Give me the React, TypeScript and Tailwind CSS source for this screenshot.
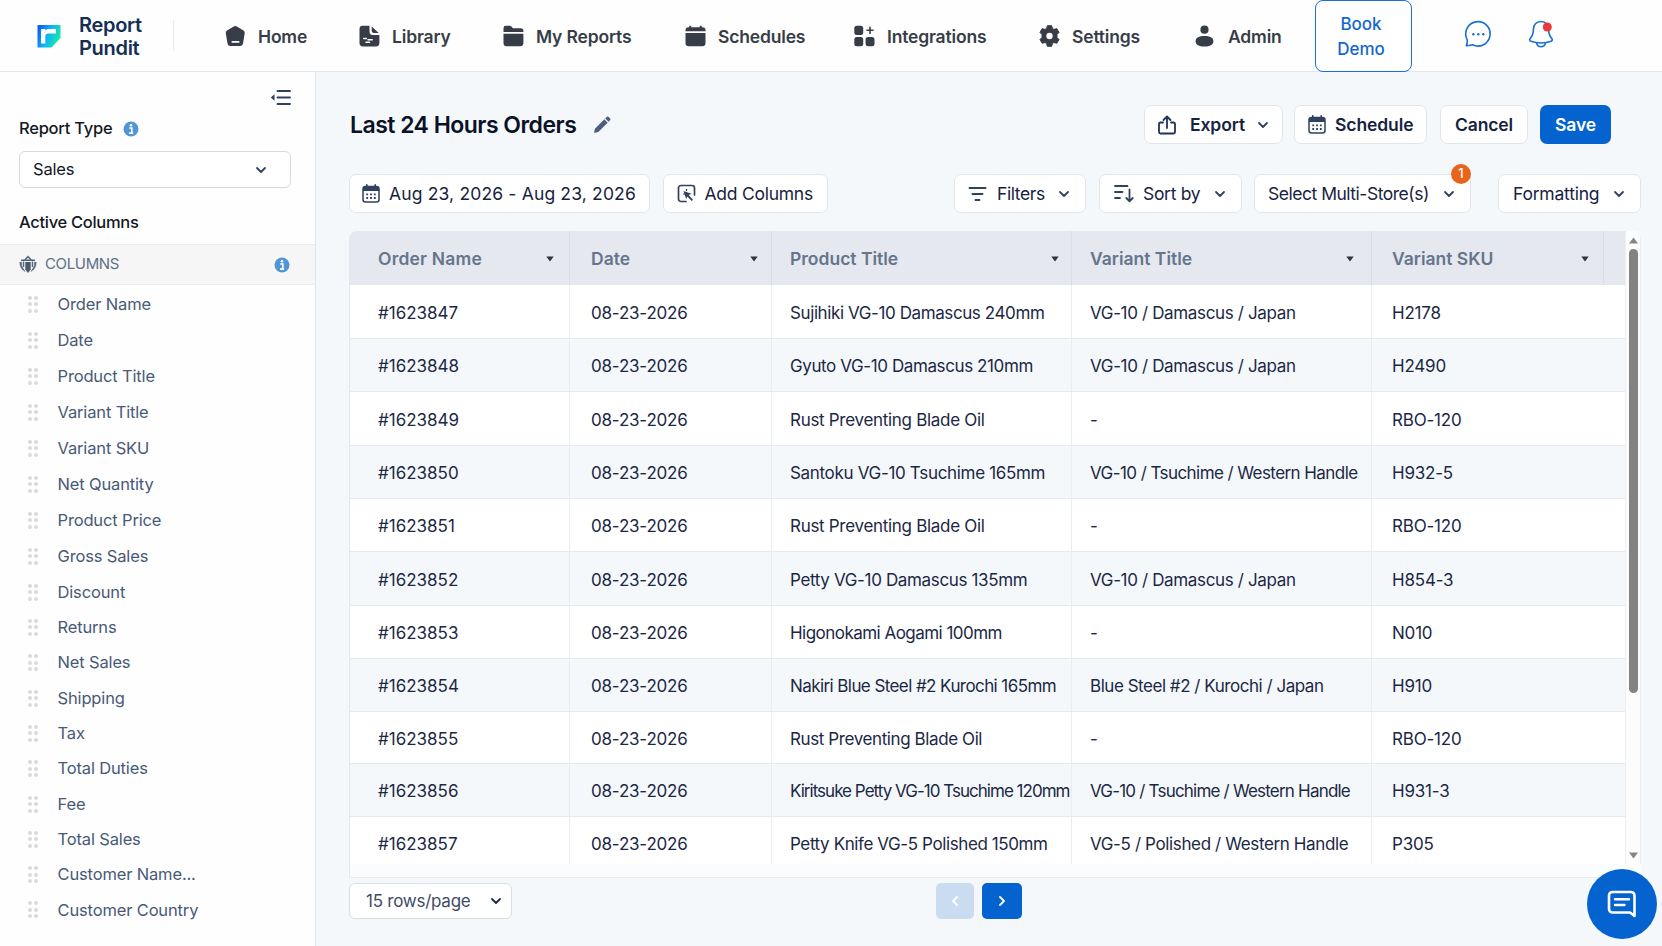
import type { ReactNode } from 'react'

interface NavItem {
  label: string
  width: string
  icon: ReactNode
}

interface OrderRow {
  id: string
  product: string
  variant: string
  sku: string
  height: string
  productTracking: string
  variantTracking: string
}

const ICON = '#373d47'
const NAVY = '#2f4260'

const navItems: NavItem[] = [
  {
    label: 'Home',
    width: 'w-[134px]',
    icon: (
      <svg width="21" height="22" viewBox="0 0 21 22">
        <path d="M8.7 1.4a3 3 0 0 1 3.2 0l6.6 4.2a2.6 2.6 0 0 1 1.2 2.7l-1.6 10A3 3 0 0 1 15.2 21H5.5a3 3 0 0 1-3-2.6L.8 8.3A2.6 2.6 0 0 1 2 5.6z" fill={ICON} />
        <rect x="6.5" y="16" width="8" height="1.8" rx=".9" fill="#fff" />
      </svg>
    ),
  },
  {
    label: 'Library',
    width: 'w-[144px]',
    icon: (
      <svg width="21" height="22" viewBox="0 0 21 22">
        <path d="M3.8.7h6.7v5.8a3.5 3.5 0 0 0 3.5 3.5h6.4v8a3.4 3.4 0 0 1-3.4 3.4H3.900A3.4 3.4 0 0 1 .5 18V4A3.3 3.3 0 0 1 3.8.7z" fill={ICON} />
        <path d="M12.7 1.4l7 6.7h-4.5a2.5 2.5 0 0 1-2.5-2.5z" fill={ICON} />
        <path d="M4.6 13.4h2.800M9 14.7h4.2M7 17.3h3.5" stroke="#fff" strokeWidth="1.5" strokeLinecap="round" />
      </svg>
    ),
  },
  {
    label: 'My Reports',
    width: 'w-[182px]',
    icon: (
      <svg width="21" height="22" viewBox="0 0 21 22">
        <path d="M.5 7V3.200A2.4 2.4 0 0 1 2.9.8h3.8c.8 0 1.4.3 1.9.9L10 3.2h7.6a2.8 2.8 0 0 1 2.8 2.8v1z" fill={ICON} />
        <path d="M.5 8.7h19.900V18a3.3 3.3 0 0 1-3.3 3.3H3.800A3.3 3.3 0 0 1 .5 18z" fill={ICON} />
      </svg>
    ),
  },
  {
    label: 'Schedules',
    width: 'w-[169px]',
    icon: (
      <svg width="21" height="22" viewBox="0 0 21 22">
        <path d="M4.3.8h1.900v1.5h8.600V.8h1.900v1.5h.8a3 3 0 0 1 3 3v.9H.5v-.9a3 3 0 0 1 3-3h.8z" fill={ICON} />
        <path d="M.5 7.9h20V18a3.3 3.3 0 0 1-3.3 3.3H3.800A3.3 3.3 0 0 1 .5 18z" fill={ICON} />
      </svg>
    ),
  },
  {
    label: 'Integrations',
    width: 'w-[185px]',
    icon: (
      <svg width="21" height="22" viewBox="0 0 21 22">
        <rect x=".3" y=".7" width="8.9" height="9.3" rx="2.5" fill={ICON} />
        <rect x=".3" y="12" width="8.9" height="9.3" rx="2.5" fill={ICON} />
        <rect x="11.6" y="12" width="8.9" height="9.3" rx="2.5" fill={ICON} />
        <path d="M16 1.7v7.200M12.4 5.3h7.2" stroke={ICON} strokeWidth="1.6" />
      </svg>
    ),
  },
  {
    label: 'Settings',
    width: 'w-[156px]',
    icon: (
      <svg width="21" height="22" viewBox="0 0 21 22">
        <path
          d="M8.3.7h4.4l.7 2.8 1.6.9 2.8-.8 2.2 3.8-2 2.100v2.900l2 2.100-2.2 3.8-2.8-.8-1.6.9-.7 2.900H8.300l-.7-2.900-1.6-.9-2.8.8L1 14.5l2-2.100V9.500L1 7.4l2.2-3.800 2.8.8 1.6-.9z"
          fill={ICON}
          stroke={ICON}
          strokeLinejoin="round"
        />
        <circle cx="10.5" cy="11" r="3.2" fill="#fff" />
      </svg>
    ),
  },
  {
    label: 'Admin',
    width: 'w-[120px]',
    icon: (
      <svg width="21" height="22" viewBox="0 0 21 22">
        <circle cx="9.5" cy="4.700" r="4.1" fill={ICON} />
        <path d="M.6 16.200c0-3.400 3.600-5.100 8.900-5.100s8.900 1.700 8.900 5.100-3.400 5.300-8.900 5.300-8.900-1.900-8.900-5.300z" fill={ICON} />
      </svg>
    ),
  },
]

const columns = [
  'Order Name', 'Date', 'Product Title', 'Variant Title', 'Variant SKU', 'Net Quantity',
  'Product Price', 'Gross Sales', 'Discount', 'Returns', 'Net Sales', 'Shipping', 'Tax',
  'Total Duties', 'Fee', 'Total Sales', 'Customer Name...', 'Customer Country',
]

const headers = [
  { label: 'Order Name', cell: 'w-[220px] pl-7 pr-[15px] tracking-[0.2px]' },
  { label: 'Date', cell: 'w-[202px] pl-[21px] pr-[13px]' },
  { label: 'Product Title', cell: 'w-[300px] pl-[18px] pr-[12px]' },
  { label: 'Variant Title', cell: 'w-[300px] pl-[18px] pr-[17px]' },
  { label: 'Variant SKU', cell: 'w-[232px] pl-[20px] pr-[14px]' },
]

const rows: OrderRow[] = [
  { id: '#1623847', product: 'Sujihiki VG-10 Damascus 240mm', variant: 'VG-10 / Damascus / Japan', sku: 'H2178', height: 'h-[54px]', productTracking: 'tracking-[-0.4px]', variantTracking: 'tracking-[-0.35px]' },
  { id: '#1623848', product: 'Gyuto VG-10 Damascus 210mm', variant: 'VG-10 / Damascus / Japan', sku: 'H2490', height: 'h-[53px]', productTracking: 'tracking-[-0.4px]', variantTracking: 'tracking-[-0.35px]' },
  { id: '#1623849', product: 'Rust Preventing Blade Oil', variant: '-', sku: 'RBO-120', height: 'h-[54px]', productTracking: 'tracking-[-0.3px]', variantTracking: '' },
  { id: '#1623850', product: 'Santoku VG-10 Tsuchime 165mm', variant: 'VG-10 / Tsuchime / Western Handle', sku: 'H932-5', height: 'h-[53px]', productTracking: 'tracking-[-0.32px]', variantTracking: 'tracking-[-0.57px]' },
  { id: '#1623851', product: 'Rust Preventing Blade Oil', variant: '-', sku: 'RBO-120', height: 'h-[53px]', productTracking: 'tracking-[-0.3px]', variantTracking: '' },
  { id: '#1623852', product: 'Petty VG-10 Damascus 135mm', variant: 'VG-10 / Damascus / Japan', sku: 'H854-3', height: 'h-[54px]', productTracking: 'tracking-[-0.35px]', variantTracking: 'tracking-[-0.35px]' },
  { id: '#1623853', product: 'Higonokami Aogami 100mm', variant: '-', sku: 'N010', height: 'h-[53px]', productTracking: 'tracking-[-0.53px]', variantTracking: '' },
  { id: '#1623854', product: 'Nakiri Blue Steel #2 Kurochi 165mm', variant: 'Blue Steel #2 / Kurochi / Japan', sku: 'H910', height: 'h-[53px]', productTracking: 'tracking-[-0.58px]', variantTracking: 'tracking-[-0.47px]' },
  { id: '#1623855', product: 'Rust Preventing Blade Oil', variant: '-', sku: 'RBO-120', height: 'h-[52px]', productTracking: 'tracking-[-0.4px]', variantTracking: '' },
  { id: '#1623856', product: 'Kiritsuke Petty VG-10 Tsuchime 120mm', variant: 'VG-10 / Tsuchime / Western Handle', sku: 'H931-3', height: 'h-[53px]', productTracking: 'tracking-[-0.98px]', variantTracking: 'tracking-[-0.8px]' },
  { id: '#1623857', product: 'Petty Knife VG-5 Polished 150mm', variant: 'VG-5 / Polished / Western Handle', sku: 'P305', height: 'h-[53px]', productTracking: 'tracking-[-0.4px]', variantTracking: 'tracking-[-0.37px]' },
]

const Chevron = ({ color = NAVY, className = '' }: { color?: string; className?: string }) => (
  <svg width="12" height="12" viewBox="0 0 12 12" className={`shrink-0 ${className}`}>
    <path d="M2 4l4 4 4-4" fill="none" stroke={color} strokeWidth="1.8" strokeLinecap="round" strokeLinejoin="round" />
  </svg>
)

const InfoIcon = () => (
  <svg width="16" height="16" viewBox="0 0 16 16" className="shrink-0">
    <circle cx="8" cy="8" r="7.5" fill="#5096d6" />
    <circle cx="8" cy="4.2" r="1.3" fill="#fff" />
    <path d="M6.200 7h2.600v4.800M6 12.100h4.200" fill="none" stroke="#fff" strokeWidth="1.700" />
  </svg>
)

const CalendarIcon = () => (
  <svg width="18" height="19" viewBox="0 0 18 19" className="shrink-0">
    <rect x="1" y="2.5" width="16" height="15.5" rx="2.5" fill="none" stroke={NAVY} strokeWidth="1.5" />
    <path d="M1 7V4.500a2 2 0 0 1 2-2h12a2 2 0 0 1 2 2V7z" fill={NAVY} />
    <path d="M4.8.8v2.500M13.200.8v2.500" stroke={NAVY} strokeWidth="1.6" strokeLinecap="round" />
    <path d="M4.300 10.300h1.800M8.100 10.300h1.800M11.900 10.300h1.800M4.300 14h1.800M8.100 14h1.800M11.900 14h1.800" stroke={NAVY} strokeWidth="1.8" />
  </svg>
)

const DragHandle = () => (
  <span className="grid w-[10px] grid-cols-2 gap-x-[2px] gap-y-[2.5px]">
    {[0, 1, 2, 3, 4, 5].map((dot) => (
      <span key={dot} className="size-1 rounded-full bg-[#dadadc]" />
    ))}
  </span>
)

function TopBar() {
  return (
    <header className="flex h-[72px] items-center border-b border-[#e4e7eb] bg-[#fefefe] pl-[37px]">
      <svg width="24" height="24" viewBox="0 0 24 24" className="shrink-0">
        <defs>
          <linearGradient id="brand" x1="0" y1="0.3" x2="1" y2="0.7">
            <stop offset="0" stopColor="#0a62f0" />
            <stop offset=".45" stopColor="#10b4f8" />
            <stop offset="1" stopColor="#1df09a" />
          </linearGradient>
        </defs>
        <path d="M.5 1h23v13L14.500 23.500H.5z" fill="url(#brand)" />
        <path d="M4 5h4.300v1.800L10.300 5H19v4.500h-7.500c-2 0-3.200 1-3.200 3v7H4z" fill="#fff" />
      </svg>
      <div className="ml-[18px] w-[94px] pt-[2px] text-[20px] leading-[23px] font-semibold tracking-[-0.3px] text-[#142e54]">
        Report
        <br />
        Pundit
      </div>
      <div className="h-[31px] w-px bg-[#e6e9ee]" />
      <nav className="ml-[51px] flex">
        {navItems.map((item) => (
          <a key={item.label} className={`flex items-center gap-3 ${item.width}`}>
            {item.icon}
            <span className="pt-[3px] text-[17.5px] font-semibold tracking-[-0.17px] whitespace-nowrap text-[#373d47]">{item.label}</span>
          </a>
        ))}
      </nav>
      <button className="h-[72px] w-[97px] rounded-lg border border-[#1a6fd0] bg-white pt-[2px] pr-[5px] text-center text-[17px] leading-[25px] font-medium text-[#1467cc]">
        Book
        <br />
        Demo
      </button>
      <svg width="28" height="28" viewBox="0 0 28 28" className="ml-[52px] -mt-1">
        <path d="M3.100 19.500A12.200 12.200 0 1 1 8.500 24.800c-1.600.3-3.500.8-6.200.9.8-1.800 1.300-3.600.8-6.200z" fill="none" stroke="#1a6fd0" strokeWidth="1.6" strokeLinejoin="round" />
        <circle cx="9.3" cy="14.3" r="1.2" fill="#1a6fd0" />
        <circle cx="14.3" cy="14.3" r="1.2" fill="#1a6fd0" />
        <circle cx="19.3" cy="14.3" r="1.2" fill="#1a6fd0" />
      </svg>
      <svg width="28" height="30" viewBox="0 0 28 30" className="ml-[35px] -mt-1">
        <path d="M14 2.500c-4.800 0-7.600 3.500-7.600 7.800 0 5.200-.9 6.800-3.200 9.300-.9 1-.6 2.300.6 2.700 6 2 14.400 2 20.400 0 1.200-.4 1.500-1.700.6-2.700-2.300-2.500-3.200-4.100-3.200-9.300 0-4.300-2.800-7.800-7.600-7.800z" fill="none" stroke="#1a6fd0" strokeWidth="1.6" />
        <path d="M9.500 24c.8 2.800 2.500 3.800 4.500 3.800s3.700-1 4.500-3.800" fill="none" stroke="#1a6fd0" strokeWidth="1.6" />
        <circle cx="20.3" cy="8" r="4.500" fill="#ea3a3d" />
      </svg>
    </header>
  )
}

function Sidebar() {
  return (
    <aside className="w-[316px] shrink-0 border-r border-[#e1e5ec] bg-[#fefefe]">
      <div className="flex h-[48px] items-center justify-end pt-[3px] pr-[24px]">
        <svg width="21" height="17" viewBox="0 0 21 17">
          <path d="M7.500 2h12.500M7.500 8.500h12.500M7.500 15h12.500" stroke={NAVY} strokeWidth="1.9" strokeLinecap="round" />
          <path d="M4.500 5.300v6.400L.8 8.500z" fill={NAVY} />
        </svg>
      </div>
      <div className="flex h-[17px] items-center gap-[11px] px-[19px]">
        <span className="text-[16.5px] font-medium tracking-[-0.25px] text-[#14181f]">Report Type</span>
        <InfoIcon />
      </div>
      <div className="mx-[19px] mt-[14px] flex h-[37px] w-[272px] items-center justify-between rounded-md border border-[#d5dae5] bg-white pr-[23px] pl-[13px]">
        <span className="text-[16.5px] tracking-[-0.2px] text-[#14181f]">Sales</span>
        <Chevron />
      </div>
      <h3 className="mt-[21px] px-[19px] text-[16.5px] leading-[26px] font-medium tracking-[-0.3px] text-[#14181f]">Active Columns</h3>
      <div className="mt-[9px] flex h-[41px] items-center border-y border-[#ececef] bg-[#f6f6f7] pr-[25px] pl-[19px]">
        <svg width="18" height="19" viewBox="0 0 18 19">
          <path d="M6 4.800L9 1.500l3 3.300M2 5.200h14" fill="none" stroke="#56647a" strokeWidth="1.500" />
          <path d="M6.300 7h5.400v7.500L9 18l-2.700-3.500z" fill="#4c5a70" />
          <path d="M.8 7.200h1.700v3.600L6 16.500C2.500 14.500.8 11.500.8 7.200zM17.200 7.200h-1.700v3.600L12 16.500c3.500-2 5.200-5 5.200-9.300z" fill="#56647a" stroke="#56647a" strokeWidth=".5" />
          <path d="M4.500 6.500v5.500M13.500 6.500v5.500" stroke="#56647a" strokeWidth="1.500" />
        </svg>
        <span className="ml-[8px] flex-1 text-[15px] tracking-[-0.35px] text-[#5f6f86]">COLUMNS</span>
        <InfoIcon />
      </div>
      <ul className="mt-[1px]">
        {columns.map((name, i) => (
          <li key={name} className={`flex items-center pl-[28px] ${i < 8 ? 'h-[36.06px]' : 'h-[35.33px]'}`}>
            <DragHandle />
            <span className="ml-[19.5px] text-[16.5px] tracking-[-0.15px] text-[#485a76]">{name}</span>
          </li>
        ))}
      </ul>
    </aside>
  )
}

const outlined = 'flex h-[39px] items-center rounded-[7px] border border-[#e2e6ec] bg-white text-[#16233f]'

function Toolbar() {
  return (
    <>
      <div className="flex items-center pt-[33px]">
        <h1 className="pt-[2px] pl-px text-[23px] leading-[37px] font-semibold tracking-[-0.52px] whitespace-nowrap text-[#0a1228]">Last 24 Hours Orders</h1>
        <svg width="18" height="18" viewBox="0 0 18 18" className="ml-[17px]">
          <path d="M1 17l.9-4.300L11.300 3.300l3.400 3.400L5.300 16.100z" fill="#4d5f7c" />
          <path d="M12.200 2.400l1.300-1.300a1.600 1.600 0 0 1 2.300 0l1.100 1.100a1.600 1.600 0 0 1 0 2.300l-1.300 1.300z" fill="#4d5f7c" />
        </svg>
        <div className="ml-auto flex pr-[51px] text-[17.5px] font-semibold tracking-[-0.1px]">
          <button className={`${outlined} w-[139px] pl-3`}>
            <svg width="20" height="20" viewBox="0 0 20 20" className="shrink-0">
              <path d="M6 7.500H3.500A1.500 1.500 0 0 0 2 9v8a1.500 1.500 0 0 0 1.500 1.500h13A1.500 1.500 0 0 0 18 17V9a1.500 1.500 0 0 0-1.500-1.500H14M10 13V2M6.500 5L10 1.500 13.500 5" fill="none" stroke="#1f3355" strokeWidth="1.8" strokeLinecap="round" strokeLinejoin="round" />
            </svg>
            <span className="ml-[13px] pt-px">Export</span>
            <Chevron className="ml-3" />
          </button>
          <button className={`${outlined} ml-[11px] w-[133px] pl-[13px]`}>
            <CalendarIcon />
            <span className="ml-[9px] pt-px">Schedule</span>
          </button>
          <button className={`${outlined} ml-[13px] w-[88px] justify-center pt-px`}>Cancel</button>
          <button className="ml-[12px] h-[39px] w-[71px] rounded-[7px] bg-[#0463cf] pt-px text-white">Save</button>
        </div>
      </div>
      <div className="mt-[30px] flex pr-[21px] text-[17.5px]">
        <button className={`${outlined} w-[301px] pl-3`}>
          <CalendarIcon />
          <span className="ml-[9px] pt-px tracking-[0.16px] whitespace-nowrap">Aug 23, 2026 - Aug 23, 2026</span>
        </button>
        <button className={`${outlined} ml-[13px] w-[165px] pl-[13px]`}>
          <svg width="19" height="19" viewBox="0 0 19 19" className="shrink-0">
            <path d="M9 17.500H4A2.500 2.500 0 0 1 1.500 15V4A2.500 2.500 0 0 1 4 1.500h11A2.500 2.500 0 0 1 17.500 4v7" fill="none" stroke={NAVY} strokeWidth="1.7" strokeLinecap="round" />
            <path d="M6.500 7l8 2.800-2.800 1.300 4.300 4.600-1.200 1.200-4.400-4.500-1.300 2.600z" fill={NAVY} />
            <path d="M9.500 5v2M6 10h2" stroke={NAVY} strokeWidth="1.2" />
          </svg>
          <span className="ml-[8.5px] pt-px tracking-[-0.25px] whitespace-nowrap">Add Columns</span>
        </button>
        <div className="ml-auto flex">
          <button className={`${outlined} w-[132px] pl-[13px]`}>
            <svg width="19" height="16" viewBox="0 0 19 16" className="shrink-0">
              <path d="M1.500 2h16M4.500 8h10M7.500 14h4" stroke={NAVY} strokeWidth="1.9" strokeLinecap="round" />
            </svg>
            <span className="ml-[10px] pt-px tracking-[-0.4px]">Filters</span>
            <Chevron className="mr-[15px] ml-auto" />
          </button>
          <button className={`${outlined} ml-[13px] w-[143px] pl-[14px]`}>
            <svg width="20" height="19" viewBox="0 0 20 19" className="shrink-0">
              <path d="M1 2h12.500M1 8h7.500M1 14h5M15.500 5.500v11.500M12.300 14l3.200 3.300 3.200-3.300" fill="none" stroke={NAVY} strokeWidth="1.8" strokeLinecap="round" strokeLinejoin="round" />
            </svg>
            <span className="ml-[9px] pt-px tracking-[-0.3px]">Sort by</span>
            <Chevron className="mr-[15px] ml-auto" />
          </button>
          <button className={`${outlined} relative ml-[12px] w-[217px] pl-[13px]`}>
            <span className="pt-px tracking-[-0.48px] whitespace-nowrap">Select Multi-Store(s)</span>
            <Chevron className="mr-[15px] ml-auto" />
            <span className="absolute -top-[11px] -right-[1px] flex size-5 items-center justify-center rounded-full bg-[#e8641b] text-[13px] font-medium text-white">1</span>
          </button>
          <button className={`${outlined} ml-[27px] w-[143px] pl-[14px]`}>
            <span className="pt-px tracking-[-0.22px]">Formatting</span>
            <Chevron className="mr-[15px] ml-auto" />
          </button>
        </div>
      </div>
    </>
  )
}

function OrdersTable() {
  return (
    <div className="mt-[18px] mr-[21px] flex h-[647px] overflow-hidden rounded-t-lg border-b border-[#e9ecf1] bg-[#fbfcfd]">
      <div className="w-[1276px] shrink-0 border-l border-[#e3e6ec]">
        <div className="flex h-[54px] bg-[#e5e8ef]">
          {headers.map((header) => (
            <div key={header.label} className={`flex items-center justify-between border-r border-[#d9dde5] ${header.cell}`}>
              <span className="pt-[3px] text-[17.5px] font-semibold text-[#65758c]">{header.label}</span>
              <svg width="8" height="6" viewBox="0 0 8 6" className="mt-[2px]">
                <path d="M.3.5h7.400L4 5.500z" fill="#2f353f" />
              </svg>
            </div>
          ))}
        </div>
        <div className="h-[579px] overflow-hidden text-[17px] text-[#1b2845]">
          {rows.map((row, i) => (
            <div key={row.id} className={`flex border-b border-[#e6e9ee] whitespace-nowrap ${row.height} ${i % 2 ? 'bg-[#f5f8fb]' : 'bg-white'}`}>
              <div className="flex w-[220px] items-center border-r border-[#e9ecf0] pt-[4px] pl-7">{row.id}</div>
              <div className="flex w-[202px] items-center border-r border-[#e9ecf0] pt-[4px] pl-[21px] tracking-[-0.2px]">08-23-2026</div>
              <div className={`flex w-[300px] items-center border-r border-[#e9ecf0] pt-[4px] pl-[18px] ${row.productTracking}`}>{row.product}</div>
              <div className={`flex w-[300px] items-center border-r border-[#e9ecf0] pt-[4px] pl-[18px] ${row.variantTracking}`}>{row.variant}</div>
              <div className="flex items-center pt-[4px] pl-[20px] tracking-[-0.2px]">{row.sku}</div>
            </div>
          ))}
        </div>
      </div>
      <div className="flex h-[633px] flex-1 flex-col items-center border-x border-[#eceef1] bg-[#fcfcfc] pt-[6px] pl-px">
        <svg width="9" height="7" viewBox="0 0 9 7">
          <path d="M4.500.5L9 6.500H0z" fill="#858585" />
        </svg>
        <div className="mt-[5px] h-[444px] w-[9px] rounded-full bg-[#828282]" />
        <svg width="9" height="7" viewBox="0 0 9 7" className="mt-auto mb-[5px]">
          <path d="M4.500 6.500L9 .5H0z" fill="#858585" />
        </svg>
      </div>
    </div>
  )
}

function Pagination() {
  return (
    <div className="mt-[5px] flex items-center">
      <div className="flex h-[36px] w-[163px] items-center justify-between rounded-md border border-[#d9dee8] bg-white pr-[9px] pl-[16px] text-[17px] tracking-[-0.25px] text-[#3e4c64]">
        <span className="pt-px">15 rows/page</span>
        <Chevron color="#1b2a45" />
      </div>
      <button className="ml-[424px] flex h-[36px] w-[38px] items-center justify-center rounded-[5px] bg-[#c9dcf0]" aria-label="Previous">
        <Chevron color="#fff" className="rotate-90" />
      </button>
      <button className="ml-[8px] flex h-[36px] w-[40px] items-center justify-center rounded-[5px] bg-[#0463cf]" aria-label="Next">
        <Chevron color="#fff" className="-rotate-90" />
      </button>
    </div>
  )
}

export default function App() {
  return (
    <div className="h-[946px] w-[1662px] overflow-hidden bg-[#f5f8fb] font-['Inter',sans-serif]">
      <TopBar />
      <div className="flex h-[874px]">
        <Sidebar />
        <main className="min-w-0 flex-1 pl-[33px]">
          <Toolbar />
          <OrdersTable />
          <Pagination />
        </main>
      </div>
      <button className="fixed right-[5px] bottom-[7px] flex size-[70px] items-center justify-center rounded-full bg-[#0463cf]" aria-label="Chat">
        <svg width="30" height="28" viewBox="0 0 30 28">
          <path d="M27.500 26l-4.500-3.500H5.500A3.500 3.500 0 0 1 2 19V5.500A3.500 3.500 0 0 1 5.500 2H24a3.500 3.500 0 0 1 3.500 3.500z" fill="none" stroke="#fff" strokeWidth="2.6" strokeLinejoin="round" />
          <path d="M8 9.300h14M8 15h9.500" stroke="#fff" strokeWidth="2.4" strokeLinecap="round" />
        </svg>
      </button>
    </div>
  )
}
